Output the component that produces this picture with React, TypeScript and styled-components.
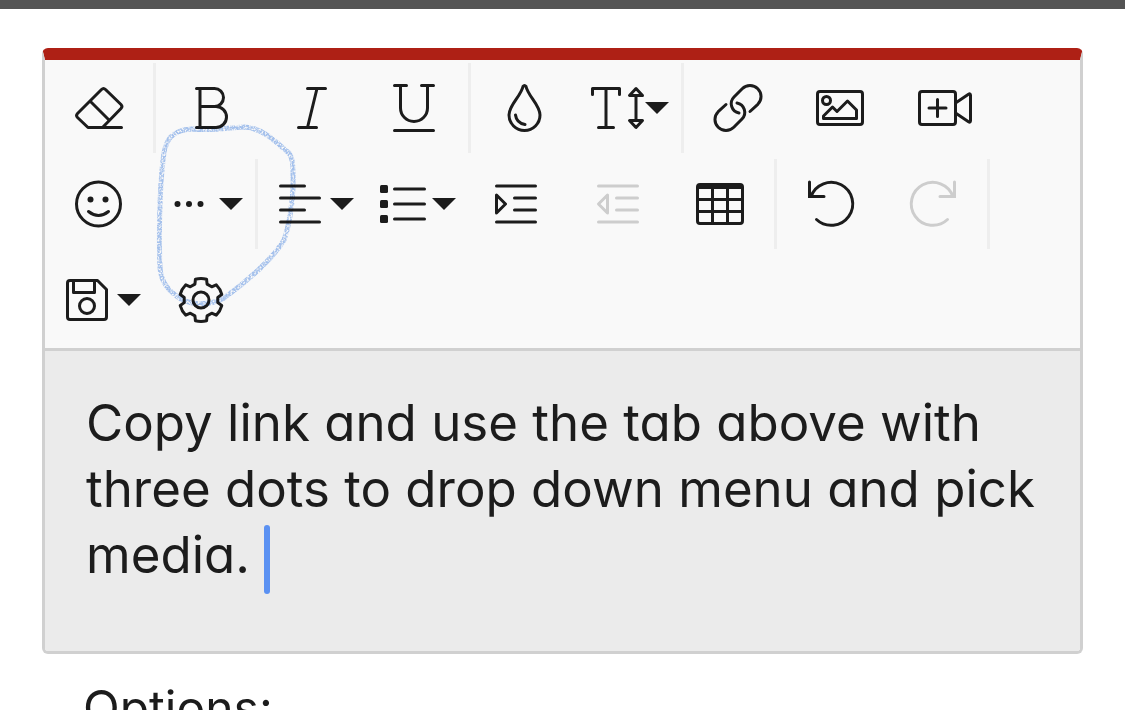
import React from "react";
import styled, { createGlobalStyle } from "styled-components";

const GlobalStyle = createGlobalStyle`
  *, *::before, *::after { box-sizing: border-box; }
  body {
    margin: 0;
    background: #fff;
    color: #1c1c1c;
    font-family: Inter, "Open Sans", sans-serif;
    font-feature-settings: "cv11";
  }
`;

const Page = styled.div`
  height: 100vh;
  overflow: hidden;
`;

const TopBar = styled.header`
  height: 9px;
  background: #545454;
`;

const Main = styled.main`
  padding: 39px 42px 0;
`;

const Editor = styled.section`
  position: relative;
  border: 3px solid #d0d0d0;
  border-top: 12px solid #ae2015;
  border-radius: 6px;
  background: #f9f9f9;
`;

const Toolbar = styled.div`
  display: flex;
  flex-wrap: wrap;
  padding: 0 3px;
  border-bottom: 3px solid #d0d0d0;
`;

const ToolButton = styled.button<{ $menu?: boolean }>`
  display: flex;
  align-items: center;
  justify-content: ${(p) => (p.$menu ? "flex-start" : "center")};
  gap: 6px;
  width: 102px;
  height: 96px;
  padding: ${(p) => (p.$menu ? "0 9px 0 15px" : "0")};
  border: 0;
  background: none;
  color: #1c1c1c;
  cursor: pointer;

  &:disabled {
    color: #cdcdcd;
    cursor: default;
  }
`;

const Separator = styled.span`
  width: 3px;
  height: 90px;
  margin: 3px;
  background: #eeeeee;
`;

const Glyph = styled.svg`
  flex: none;
  width: 48px;
  height: 48px;
  overflow: visible;
  fill: none;
  stroke: currentColor;
  stroke-width: 3px;
  stroke-linecap: round;
  stroke-linejoin: round;

  .solid {
    fill: currentColor;
    stroke: none;
  }
`;

const CaretDown = styled.svg`
  flex: none;
  width: 24px;
  height: 12px;
  fill: currentColor;
`;

const TextArea = styled.div`
  min-height: 300px;
  padding: 39px 40px 39px 41px;
  border-radius: 0 0 3px 3px;
  background: #ebebeb;
  font-size: 51px;
  line-height: 66px;
  outline: none;
  caret-color: transparent;

  p { margin: 0; }
`;

const TextCaret = styled.span`
  display: inline-block;
  width: 6px;
  height: 69px;
  margin: -3px 0;
  border-radius: 3px;
  background: #5b91f2;
  vertical-align: middle;
`;

const Marker = styled.svg`
  position: absolute;
  top: 60px;
  left: 108px;
  width: 150px;
  height: 196px;
  fill: none;
  stroke: #a9c6f2;
  stroke-width: 5px;
  stroke-linecap: round;
  pointer-events: none;
  mix-blend-mode: multiply;
`;

const OptionsLabel = styled.h2`
  margin: 21px 0 0;
  padding-left: 41px;
  font-size: 48px;
  font-weight: 400;
  line-height: 66px;
`;

/** Outline of a six-toothed gear centred in the 48 unit icon box. */
const gearPath = (() => {
  const at = (radius: number, degrees: number) => {
    const a = (degrees * Math.PI) / 180;
    return `${(24 + radius * Math.sin(a)).toFixed(2)} ${(24 - radius * Math.cos(a)).toFixed(2)}`;
  };
  let d = "";
  for (let k = 0; k < 6; k++) {
    const c = k * 60;
    d += `${k ? "L" : "M"}${at(17, c - 21)}L${at(21.5, c - 15)}A21.5 21.5 0 0 1 ${at(21.5, c + 15)}L${at(17, c + 21)}`;
  }
  return d + "Z";
})();

const undoShape = (
  <>
    <path d="M9.5 39.5A21.5 21.5 0 1 0 4 16.5" />
    <path d="M2.5 2V16.5H17" strokeLinejoin="miter" />
  </>
);

type Tool =
  | "|"
  | { name: string; icon: React.ReactNode; menu?: boolean; disabled?: boolean };

const tools: Tool[] = [
  {
    name: "Clear formatting",
    icon: (
      <path d="M46.5 43.5H13L2.5 33.5Q.5 31.5 2.5 29.5L26.5 5.5Q28.5 3.5 30.5 5.5L46 20.5Q48 22.5 46 24.5L28 43M15 17L34 36" />
    ),
  },
  "|",
  {
    name: "Bold",
    icon: <path d="M10.5 4.5H28.5A9 9 0 0 1 28.5 22.5H14M28.5 22.5H30A10.5 10.5 0 0 1 30 43.5H10.5M14 4.5V43.5" />,
  },
  { name: "Italic", icon: <path d="M19.5 4.5H37.5M10.5 43.5H28.5M29 4.5L19.5 43.5" /> },
  {
    name: "Underline",
    icon: <path d="M4.5 1.5H16.5M31.5 1.5H43.5M10.5 1.5V24A13.5 13.5 0 0 0 37.5 24V1.5M4.5 46.5H43.5" />,
  },
  "|",
  {
    name: "Text color",
    icon: (
      <path d="M22 2.5Q23.5 .5 25 2.5C27 12 39 21 39 31A15.5 15.5 0 0 1 8 31C8 21 20 12 22 2.5ZM14.5 31Q15.5 39 24 40.5" />
    ),
  },
  {
    name: "Font size",
    menu: true,
    icon: (
      <path d="M1.5 10.5V4.5H28.5V10.5M15 4.5V43.5M7.5 43.5H22.5M45 12V36M38.5 11.5H51.5L45 4.5ZM38.5 36.5H51.5L45 43.5Z" />
    ),
  },
  "|",
  {
    name: "Insert link",
    icon: (
      <path d="M36 27.5L43.8 20.3A11 11 0 0 0 28.2 4.7L20 13A9.5 9.5 0 0 0 25 29M12 20.5L4.2 27.7A11 11 0 0 0 19.8 43.3L28 35A9.5 9.5 0 0 0 23 19" />
    ),
  },
  {
    name: "Insert image",
    icon: (
      <>
        <rect x="1.5" y="7.5" width="45" height="33" rx="2.5" />
        <circle cx="10.5" cy="16.5" r="4" />
        <path d="M7.5 34.5V32L16.5 23L21 27.5L31.5 17L40.5 26V34.5Z" />
      </>
    ),
  },
  {
    name: "Insert video",
    icon: (
      <>
        <rect x="1.5" y="7.5" width="36" height="33" rx="2.5" />
        <path d="M37.5 19L50.5 10.3Q52.5 9 52.5 11.5V36.5Q52.5 39 50.5 37.7L37.5 29M19.5 15.5V32.5M11 24H28" />
      </>
    ),
  },
  {
    name: "Emoji",
    icon: (
      <>
        <circle cx="23.5" cy="24" r="22" />
        <circle className="solid" cx="15.5" cy="19.5" r="3" />
        <circle className="solid" cx="30.5" cy="19.5" r="3" />
        <path d="M13.5 31.5Q23.5 39.5 33.5 31.5" />
      </>
    ),
  },
  {
    name: "More",
    menu: true,
    icon: (
      <>
        <circle className="solid" cx="12.5" cy="24" r="3" />
        <circle className="solid" cx="24" cy="24" r="3" />
        <circle className="solid" cx="35.5" cy="24" r="3" />
      </>
    ),
  },
  "|",
  { name: "Align", menu: true, icon: <path d="M4.5 6H28.5M4.5 18H43.5M4.5 30H28.5M4.5 42H43.5" /> },
  {
    name: "Bullet list",
    menu: true,
    icon: (
      <>
        <rect className="solid" x="2" y="5" width="8" height="8" rx="1.5" />
        <rect className="solid" x="2" y="20" width="8" height="8" rx="1.5" />
        <rect className="solid" x="2" y="35" width="8" height="8" rx="1.5" />
        <path d="M16.5 9H46.5M16.5 24H46.5M16.5 39H46.5" />
      </>
    ),
  },
  {
    name: "Increase indent",
    icon: <path d="M4.5 6H43.5M22.5 18H43.5M22.5 30H43.5M4.5 42H43.5M4.5 15V33L13.5 24Z" />,
  },
  {
    name: "Decrease indent",
    disabled: true,
    icon: <path d="M4.5 6H43.5M22.5 18H43.5M22.5 30H43.5M4.5 42H43.5M13.5 15V33L4.5 24Z" />,
  },
  {
    name: "Insert table",
    icon: (
      <>
        <rect x="1.5" y="4.5" width="45" height="39" rx="2.5" />
        <path d="M2 7.5H46M2 19.5H46M2 31.5H46M16.5 7V43M31.5 7V43" />
      </>
    ),
  },
  "|",
  { name: "Undo", icon: undoShape },
  { name: "Redo", disabled: true, icon: <g transform="translate(48 0) scale(-1 1)">{undoShape}</g> },
  "|",
  {
    name: "Save",
    menu: true,
    icon: (
      <>
        <path d="M7 4.5H34.5L43.5 13.5V41Q43.5 43.5 41 43.5H7Q4.5 43.5 4.5 41V7Q4.5 4.5 7 4.5ZM10.5 4.5V16.5H31.5V4.5" />
        <circle cx="24" cy="30" r="7.5" />
      </>
    ),
  },
  {
    name: "Settings",
    icon: (
      <>
        <path d={gearPath} />
        <circle cx="24" cy="24" r="8" />
      </>
    ),
  },
];

export default function App() {
  return (
    <Page>
      <GlobalStyle />
      <TopBar />
      <Main>
        <Editor>
          <Toolbar role="toolbar" aria-label="Formatting">
            {tools.map((tool, i) =>
              tool === "|" ? (
                <Separator key={i} />
              ) : (
                <ToolButton
                  key={i}
                  type="button"
                  aria-label={tool.name}
                  aria-haspopup={tool.menu ? "menu" : undefined}
                  $menu={tool.menu}
                  disabled={tool.disabled}
                >
                  <Glyph viewBox="0 0 48 48" aria-hidden="true">
                    {tool.icon}
                  </Glyph>
                  {tool.menu && (
                    <CaretDown viewBox="0 0 24 12" aria-hidden="true">
                      <path d="M0 0H24L12 12Z" />
                    </CaretDown>
                  )}
                </ToolButton>
              )
            )}
          </Toolbar>
          <TextArea
            role="textbox"
            aria-multiline="true"
            aria-label="Message"
            contentEditable
            suppressContentEditableWarning
            spellCheck={false}
          >
            <p>
              Copy link and use the tab above with three dots to drop down menu and pick media.{" "}
              <TextCaret />
            </p>
          </TextArea>
          <Marker viewBox="153 120 150 196" aria-hidden="true">
            <filter id="chalk" x="-10%" y="-10%" width="120%" height="120%">
              <feTurbulence type="fractalNoise" baseFrequency="0.55" numOctaves="2" seed="4" result="noise" />
              <feColorMatrix
                in="noise"
                type="matrix"
                values="0 0 0 0 0  0 0 0 0 0  0 0 0 0 0  3 0 0 0 -0.8"
                result="grain"
              />
              <feComposite in="SourceGraphic" in2="grain" operator="in" />
            </filter>
            <path
              filter="url(#chalk)"
              d="M163 160C165 140 171 130 192 129C215 131 225 128 245 127C263 128 278 144 289 153C294 160 293 172 293 188C292 206 289 226 284 240C272 260 245 283 224 298C210 306 192 305 181 299C168 291 161 282 160 268C159 245 159 195 163 160"
            />
          </Marker>
        </Editor>
        <OptionsLabel>Options:</OptionsLabel>
      </Main>
    </Page>
  );
}
